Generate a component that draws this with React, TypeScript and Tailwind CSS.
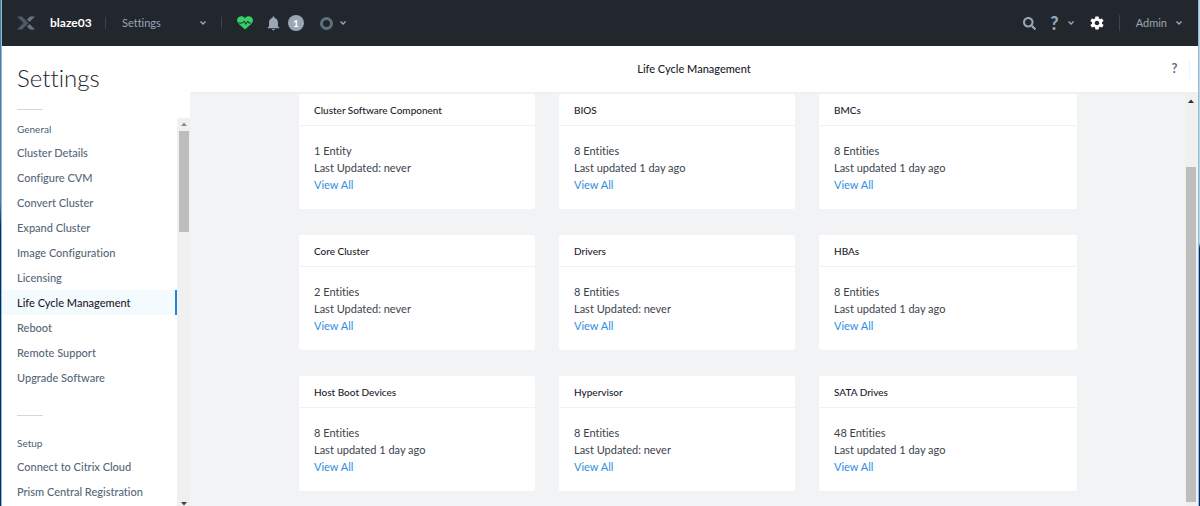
import { FaSearch } from "react-icons/fa";
import { IoMdNotifications, IoMdSettings } from "react-icons/io";

interface NavGroup {
  title: string;
  items: string[];
}

interface Card {
  title: string;
  count: string;
  updated: string;
}

const NAV_GROUPS: NavGroup[] = [
  {
    title: "General",
    items: [
      "Cluster Details",
      "Configure CVM",
      "Convert Cluster",
      "Expand Cluster",
      "Image Configuration",
      "Licensing",
      "Life Cycle Management",
      "Reboot",
      "Remote Support",
      "Upgrade Software",
    ],
  },
  {
    title: "Setup",
    items: ["Connect to Citrix Cloud", "Prism Central Registration"],
  },
];

const ACTIVE_ITEM = "Life Cycle Management";

const CARDS: Card[] = [
  { title: "Cluster Software Component", count: "1 Entity", updated: "Last Updated: never" },
  { title: "BIOS", count: "8 Entities", updated: "Last updated 1 day ago" },
  { title: "BMCs", count: "8 Entities", updated: "Last updated 1 day ago" },
  { title: "Core Cluster", count: "2 Entities", updated: "Last Updated: never" },
  { title: "Drivers", count: "8 Entities", updated: "Last Updated: never" },
  { title: "HBAs", count: "8 Entities", updated: "Last updated 1 day ago" },
  { title: "Host Boot Devices", count: "8 Entities", updated: "Last updated 1 day ago" },
  { title: "Hypervisor", count: "8 Entities", updated: "Last Updated: never" },
  { title: "SATA Drives", count: "48 Entities", updated: "Last updated 1 day ago" },
];

function Chevron() {
  return (
    <svg
      viewBox="0 0 8 6"
      className="w-2 h-1.5 shrink-0"
      fill="none"
      stroke="currentColor"
      strokeWidth="1.5"
    >
      <path d="M1.5 1.5 4 4l2.5-2.5" />
    </svg>
  );
}

function Arrow({ down = false, className = "" }: { down?: boolean; className?: string }) {
  return (
    <svg viewBox="0 0 6 4" className={`w-1.5 h-1 shrink-0 ${className}`} fill="currentColor">
      <path d={down ? "M0 0h6L3 3.5z" : "M0 4h6L3 .5z"} />
    </svg>
  );
}

function Logo() {
  return (
    <svg viewBox="0 0 18 14" className="w-[18px] h-3.5 shrink-0">
      <path d="M0 .5h5L11.500 7 5 13.500H0L6.500 7z" fill="#505a65" />
      <path d="M13 .5h5l-5.500 5.500-2.500-2.500z" fill="#6a7580" />
      <path d="M12.500 8l5.500 5.500h-5l-3-3z" fill="#6a7580" />
    </svg>
  );
}

function HealthIcon() {
  return (
    <svg viewBox="0 0 16 14" className="w-4 h-3.5 shrink-0">
      <path
        d="M8 13.6 1.3 7.4C-.5 5.5-.3 2.6 1.5 1.2 3.5-.3 6.3 0 8 2.2 9.7 0 12.5-.3 14.5 1.2c1.8 1.4 2 4.3.2 6.2z"
        fill="#36d068"
      />
      <path
        d="M1.5 7h4.2l1.6-2 1.5 3.4L10.8 5l1 2H14"
        fill="none"
        stroke="#22272e"
        strokeWidth="1"
      />
    </svg>
  );
}

function TopBar() {
  return (
    <header className="flex items-center h-[46px] shrink-0 px-[15px] bg-[#22272e] text-[#9aa5b5] text-[11px]">
      <Logo />
      <span className="ml-[15px] w-[55px] text-[12px] font-bold text-white">blaze03</span>
      <span className="w-px h-3 bg-[#3b434e]" />
      <button className="ml-4 flex items-center justify-between w-[85px]">
        Settings
        <Chevron />
      </button>
      <span className="ml-3.5 mr-[15px] w-px h-3 bg-[#3b434e]" />
      <HealthIcon />
      <button className="ml-3 flex items-center gap-1.5" aria-label="Alerts">
        <IoMdNotifications size={17} />
        <span className="flex items-center justify-center size-4 rounded-full bg-[#9aa5b5] text-white text-[10px] font-bold">
          1
        </span>
      </button>
      <button className="ml-4 flex items-center gap-1.5" aria-label="Tasks">
        <span className="size-[13px] rounded-full border-[3px] border-[#5f7080]" />
        <Chevron />
      </button>
      <div className="ml-auto flex items-center">
        <button aria-label="Search">
          <FaSearch size={13} />
        </button>
        <button className="ml-3.5 flex items-center gap-2" aria-label="Help">
          <span className="text-[18px] font-black">?</span>
          <Chevron />
        </button>
        <button className="ml-3.5 text-white" aria-label="Settings">
          <IoMdSettings size={16} />
        </button>
        <span className="ml-3.5 mr-4 w-px h-4 bg-[#3b434e]" />
        <button className="flex items-center gap-2">
          Admin
          <Chevron />
        </button>
      </div>
    </header>
  );
}

function Sidebar() {
  return (
    <aside className="w-[188px] shrink-0 flex flex-col bg-white">
      <h1 className="px-[15px] pt-4 text-[24px] leading-8 font-light text-[#1c222a]">Settings</h1>
      <div className="ml-[15px] mt-[15px] w-[26px] h-px shrink-0 bg-[#d4d8dd]" />
      <div className="mt-2 flex-1 min-h-0 flex">
        <nav className="flex-1 min-w-0 overflow-hidden">
          {NAV_GROUPS.map((group, index) => (
            <section key={group.title}>
              {index > 0 && <div className="ml-[15px] mt-[25px] mb-4 w-[26px] h-px bg-[#d4d8dd]" />}
              <h2 className="px-[15px] text-[10px] leading-[22px] text-[#4c5e72]">{group.title}</h2>
              <ul>
                {group.items.map((item) => (
                  <li key={item}>
                    <a
                      href="#"
                      className={`block px-[15px] text-[11px] leading-[25px] font-medium whitespace-nowrap ${
                        item === ACTIVE_ITEM
                          ? "bg-[#f3fbfe] text-[#1c222a] border-r-2 border-[#2286d4]"
                          : "text-[#566779]"
                      }`}
                    >
                      {item}
                    </a>
                  </li>
                ))}
              </ul>
            </section>
          ))}
        </nav>
        <div className="w-[13px] shrink-0 flex flex-col items-center bg-[#f0f0f0]">
          <Arrow className="my-1 text-[#8c8c8c]" />
          <div className="w-2.5 h-[101px] mt-px bg-[#bdbdbd]" />
          <Arrow down className="mt-auto text-[#404040]" />
        </div>
      </div>
    </aside>
  );
}

function EntityCard({ title, count, updated }: Card) {
  return (
    <article className="bg-white rounded-xs text-[#3c434d]">
      <h3 className="px-[15px] h-8 text-[10px] leading-8 font-medium text-[#1c222a] border-b border-[#f1f2f4]">
        {title}
      </h3>
      <div className="px-[15px] py-4 text-[11px] leading-[17px]">
        <p>{count}</p>
        <p>{updated}</p>
        <a href="#" className="block text-[#2e8ee0]">
          View All
        </a>
      </div>
    </article>
  );
}

export default function App() {
  return (
    <div className="h-screen flex overflow-hidden font-[Lato,sans-serif] [font-variant-ligatures:none]">
      {/* desktop showing on either side of the window */}
      <div className="w-px shrink-0 bg-linear-to-b from-[#4d7d94] from-40% to-[#042c68] to-45%" />
      <div className="flex-1 min-w-0 flex flex-col border-x border-[#8fbcdc] bg-white">
        <TopBar />
        <div className="flex-1 min-h-0 flex">
          <Sidebar />
          <main className="flex-1 min-w-0 flex flex-col">
            <div className="h-[47px] shrink-0 flex items-center border-b border-[#eceef0]">
              <h2 className="flex-1 pl-2 text-center text-[11px] font-medium text-[#1c222a]">
                Life Cycle Management
              </h2>
              <button
                className="w-[30px] h-5 mr-2 -ml-[30px] border-r border-[#f0f4f8] text-[13px] font-bold text-[#5f7080]"
                aria-label="Page help"
              >
                ?
              </button>
            </div>
            <div className="flex-1 min-h-0 flex bg-[#f2f3f5]">
              <div className="flex-1 min-w-0 overflow-hidden pl-[109px] pr-[108px] pt-px">
                <div className="grid grid-cols-[236fr_236fr_258fr] gap-x-6 gap-y-[26px]">
                  {CARDS.map((card) => (
                    <EntityCard key={card.title} {...card} />
                  ))}
                </div>
              </div>
              <div className="w-3 mr-px shrink-0 flex flex-col items-center bg-[#f0f0f0]">
                <Arrow className="mt-1.5 text-[#303030]" />
                <div className="w-2.5 flex-1 mt-16 mb-1 bg-[#bdbdbd]" />
              </div>
            </div>
          </main>
        </div>
      </div>
      <div className="w-px shrink-0 bg-linear-to-b from-[#c3d3e0] from-48% to-[#042c68] to-49%" />
    </div>
  );
}
